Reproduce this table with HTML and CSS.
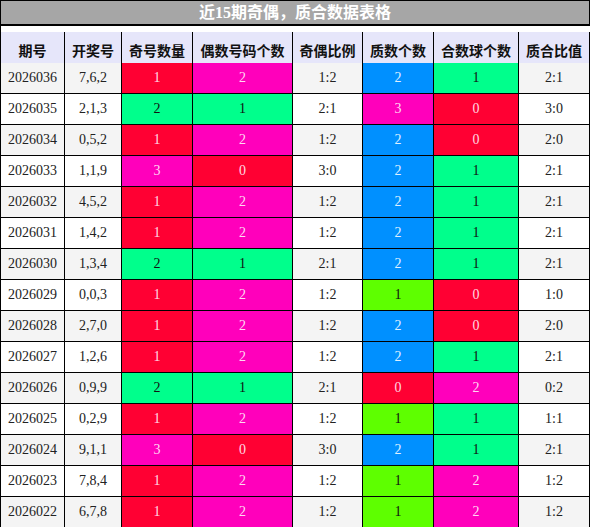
FILE: index.html
```html
<!DOCTYPE html>
<html lang="zh">
<head>
<meta charset="utf-8">
<title>近15期奇偶，质合数据表格</title>
<link rel="stylesheet" href="styles.css">
</head>
<body>
<div class="grid">
  <div class="title">近15期奇偶，质合数据表格</div>
  <div class="th">期号</div><div class="th">开奖号</div><div class="th">奇号数量</div><div class="th">偶数号码个数</div><div class="th">奇偶比例</div><div class="th">质数个数</div><div class="th">合数球个数</div><div class="th">质合比值</div>

  <div class="td alt">2026036</div><div class="td alt">7,6,2</div><div class="td red">1</div><div class="td mag">2</div><div class="td alt">1:2</div><div class="td blue">2</div><div class="td green">1</div><div class="td alt">2:1</div>
  <div class="td">2026035</div><div class="td">2,1,3</div><div class="td green">2</div><div class="td green">1</div><div class="td">2:1</div><div class="td mag">3</div><div class="td red">0</div><div class="td">3:0</div>
  <div class="td alt">2026034</div><div class="td alt">0,5,2</div><div class="td red">1</div><div class="td mag">2</div><div class="td alt">1:2</div><div class="td blue">2</div><div class="td red">0</div><div class="td alt">2:0</div>
  <div class="td">2026033</div><div class="td">1,1,9</div><div class="td mag">3</div><div class="td red">0</div><div class="td">3:0</div><div class="td blue">2</div><div class="td green">1</div><div class="td">2:1</div>
  <div class="td alt">2026032</div><div class="td alt">4,5,2</div><div class="td red">1</div><div class="td mag">2</div><div class="td alt">1:2</div><div class="td blue">2</div><div class="td green">1</div><div class="td alt">2:1</div>
  <div class="td">2026031</div><div class="td">1,4,2</div><div class="td red">1</div><div class="td mag">2</div><div class="td">1:2</div><div class="td blue">2</div><div class="td green">1</div><div class="td">2:1</div>
  <div class="td alt">2026030</div><div class="td alt">1,3,4</div><div class="td green">2</div><div class="td green">1</div><div class="td alt">2:1</div><div class="td blue">2</div><div class="td green">1</div><div class="td alt">2:1</div>
  <div class="td">2026029</div><div class="td">0,0,3</div><div class="td red">1</div><div class="td mag">2</div><div class="td">1:2</div><div class="td lime">1</div><div class="td red">0</div><div class="td">1:0</div>
  <div class="td alt">2026028</div><div class="td alt">2,7,0</div><div class="td red">1</div><div class="td mag">2</div><div class="td alt">1:2</div><div class="td blue">2</div><div class="td red">0</div><div class="td alt">2:0</div>
  <div class="td">2026027</div><div class="td">1,2,6</div><div class="td red">1</div><div class="td mag">2</div><div class="td">1:2</div><div class="td blue">2</div><div class="td green">1</div><div class="td">2:1</div>
  <div class="td alt">2026026</div><div class="td alt">0,9,9</div><div class="td green">2</div><div class="td green">1</div><div class="td alt">2:1</div><div class="td red">0</div><div class="td mag">2</div><div class="td alt">0:2</div>
  <div class="td">2026025</div><div class="td">0,2,9</div><div class="td red">1</div><div class="td mag">2</div><div class="td">1:2</div><div class="td lime">1</div><div class="td green">1</div><div class="td">1:1</div>
  <div class="td alt">2026024</div><div class="td alt">9,1,1</div><div class="td mag">3</div><div class="td red">0</div><div class="td alt">3:0</div><div class="td blue">2</div><div class="td green">1</div><div class="td alt">2:1</div>
  <div class="td">2026023</div><div class="td">7,8,4</div><div class="td red">1</div><div class="td mag">2</div><div class="td">1:2</div><div class="td lime">1</div><div class="td mag">2</div><div class="td">1:2</div>
  <div class="td alt">2026022</div><div class="td alt">6,7,8</div><div class="td red">1</div><div class="td mag">2</div><div class="td alt">1:2</div><div class="td lime">1</div><div class="td mag">2</div><div class="td alt">1:2</div>
</div>
</body>
</html>
```

FILE: styles.css
```css
* { box-sizing: border-box; }
html, body { margin: 0; padding: 0; background: #fff; }
body {
  width: 590px;
  font-family: "Liberation Serif", "Noto Sans CJK SC", serif;
  color: #222;
}
.grid {
  display: grid;
  grid-template-columns: 64px 57px 71px 100px 70px 71px 85px 71px;
  grid-auto-rows: 31px;
  width: 590px;
  border-left: 1px solid #000;
  border-top: 1px solid #000;
}
.title {
  grid-column: 1 / -1;
  height: 25px;
  background: #a6a6a6;
  color: #fff;
  font-weight: bold;
  font-size: 16px;
  line-height: 23px;
  text-align: center;
  border-right: 1px solid #000;
  border-bottom: 2px solid #000;
}
.th {
  height: 36px;
  background: #e6e6fa;
  font-family: "Noto Sans CJK SC", sans-serif;
  font-weight: bold;
  font-size: 14px;
  color: #111;
  display: flex;
  align-items: center;
  justify-content: center;
  border-right: 1px solid #000;
  border-bottom: 1px solid #000;
  white-space: nowrap;
}
.td {
  height: 31px;
  font-size: 14px;
  display: flex;
  align-items: center;
  justify-content: center;
  border-right: 1px solid #000;
  border-bottom: 1px solid #000;
  background: #fff;
}
.td.alt { background: #f4f4f4; }
.td.red { background: #ff0033; color: #ffd9e2; }
.td.mag { background: #ff00bb; color: #ffd9f2; }
.td.blue { background: #0090ff; color: #e0f0ff; }
.td.green { background: #00ff8c; color: #111; }
.td.lime { background: #5eff00; color: #111; }
```
